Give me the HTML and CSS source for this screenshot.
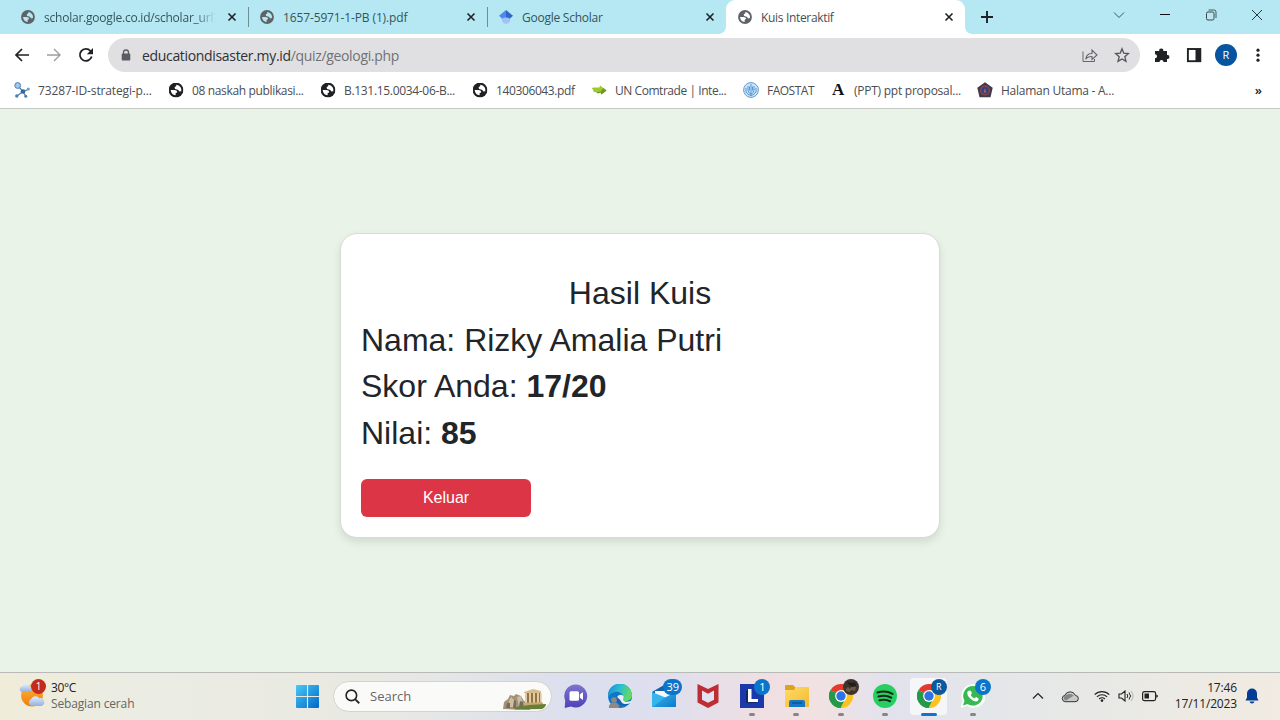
FILE: index.html
```html
<!DOCTYPE html>
<html lang="id">
<head>
<meta charset="utf-8">
<title>Kuis Interaktif</title>
<link rel="stylesheet" href="styles.css">
</head>
<body>
<svg class="defs" aria-hidden="true">
  <defs>
    <symbol id="globe" viewBox="0 0 16 16"><circle cx="8" cy="8" r="7.900" fill="currentColor"/><path d="M8.300 2.300Q11.300 2.500 12.900 5q1.200 2 .7 4.200L11.500 9.600Q10.800 7.600 9 7.500 6.300 7.200 6.500 5.300 6.700 4.300 8.200 4zM2.300 7.900H6.300Q9 8.200 9.300 9.800 9.200 11 7.600 11.200V13.700Q2.800 12.800 2.300 7.900z" fill="var(--land)"/></symbol>
    <symbol id="close" viewBox="0 0 10 10"><path d="M1.500 1.500l7 7M8.500 1.500l-7 7" stroke="#202124" stroke-width="1.600" fill="none"/></symbol>
    <symbol id="chrome" viewBox="0 0 24 24"><path d="M12 12L1.600 6A12 12 0 0 1 22.400 6z" fill="#e33b2e"/><path d="M12 12L22.400 6A12 12 0 0 1 12 24z" fill="#fcc31e"/><path d="M12 12v12A12 12 0 0 1 1.600 6z" fill="#249a48"/><path d="M12 6h10.400l-5.200 9L12 24l5-9z" fill="#fcc31e"/><path d="M1.600 6L7 15l5 3 3-1-3.500 7A12 12 0 0 1 1.600 6z" fill="#249a48"/><circle cx="12" cy="12" r="5.900" fill="#fff"/><circle cx="12" cy="12" r="4.700" fill="#2d73e8"/></symbol>
    <linearGradient id="winG" x2="1" y2="1"><stop stop-color="#48c9f8"/><stop offset="1" stop-color="#0067c8"/></linearGradient>
    <linearGradient id="chatG" x2="0" y2="1"><stop stop-color="#7f72cf"/><stop offset="1" stop-color="#4d43b8"/></linearGradient>
    <linearGradient id="edgeG" x2="1" y2=".3"><stop stop-color="#1689d4"/><stop offset=".5" stop-color="#2abbd5"/><stop offset="1" stop-color="#62da62"/></linearGradient>
    <linearGradient id="mailG" x2="1" y2="1"><stop stop-color="#35b8ef"/><stop offset="1" stop-color="#0e79cc"/></linearGradient>
    <linearGradient id="sunG" x2="0" y2="1"><stop stop-color="#fcb62c"/><stop offset="1" stop-color="#ed7d16"/></linearGradient>
    <linearGradient id="cloudG" x2="0" y2="1"><stop stop-color="#e4eefb"/><stop offset="1" stop-color="#93b1df"/></linearGradient>
    <linearGradient id="folderG" x2="1" y2="1"><stop stop-color="#ffdc68"/><stop offset="1" stop-color="#f5b92e"/></linearGradient>
  </defs>
</svg>

<header class="browser">
  <div class="tabstrip">
    <div class="tab">
      <svg class="favicon grey"><use href="#globe"/></svg><span class="tab-title fade t1">scholar.google.co.id/scholar_url?</span><svg class="tab-close"><use href="#close"/></svg>
    </div>
    <div class="tab divided">
      <svg class="favicon grey"><use href="#globe"/></svg><span class="tab-title t2">1657-5971-1-PB (1).pdf</span><svg class="tab-close"><use href="#close"/></svg>
    </div>
    <div class="tab divided">
      <svg class="favicon" viewBox="0 0 16 16"><circle cx="8" cy="10.800" r="4.900" fill="#a4c1f7"/><path d="M0 6.500L8 0v8.500Q4.800 8.500 3.700 10z" fill="#4c8af0"/><path d="M16 6.500L8 0v8.500q3.200 0 4.300 1.500z" fill="#3266c8"/></svg><span class="tab-title t3">Google Scholar</span><svg class="tab-close"><use href="#close"/></svg>
    </div>
    <div class="tab active">
      <svg class="favicon grey on-white"><use href="#globe"/></svg><span class="tab-title t4">Kuis Interaktif</span><svg class="tab-close"><use href="#close"/></svg>
    </div>
    <svg class="new-tab" viewBox="0 0 12 12"><path d="M6 0v12M0 6h12" stroke="#202124" stroke-width="1.900"/></svg>
    <div class="window-controls">
      <svg viewBox="0 0 12 12"><path d="M1 3.500l5 5 5-5" fill="none" stroke="#35545c" stroke-width="1"/></svg>
      <svg viewBox="0 0 12 12"><path d="M1 5.500h10" stroke="#111" stroke-width="1"/></svg>
      <svg viewBox="0 0 12 12"><rect x="1.500" y="3" width="7.500" height="8" rx="1.500" fill="none" stroke="#333" stroke-width=".9"/><path d="M3.500 1h5.500q2 0 2 2v6" fill="none" stroke="#333" stroke-width=".8"/></svg>
      <svg viewBox="0 0 12 12"><path d="M1 1l10 10M11 1L1 11" stroke="#26383c" stroke-width="1"/></svg>
    </div>
  </div>

  <div class="toolbar">
    <div class="nav">
      <svg viewBox="0 0 16 16"><path d="M15 8H2M8 2L2 8l6 6" fill="none" stroke="#202124" stroke-width="1.700"/></svg>
      <svg viewBox="0 0 16 16"><path d="M1 8h13M8 2l6 6-6 6" fill="none" stroke="#9c9da0" stroke-width="1.400"/></svg>
      <svg viewBox="0 0 16 16"><path d="M13.700 9.500A6 6 0 1 1 12.500 4L14 6" fill="none" stroke="#202124" stroke-width="1.800"/><path d="M15 1v6.200H8.800z" fill="#202124"/></svg>
    </div>
    <div class="omnibox">
      <svg class="lock" viewBox="0 0 10 12"><path d="M2.500 5V3.500a2.500 2.500 0 0 1 5 0V5" fill="none" stroke="#5b5c61" stroke-width="1.300"/><rect x=".7" y="4.500" width="8.600" height="7" rx="1" fill="#5b5c61"/></svg>
      <span class="url">educationdisaster.my.id<span class="path">/quiz/geologi.php</span></span>
      <svg class="share" viewBox="0 0 16 16"><path d="M1 4.500v10h11.500V12" fill="none" stroke="#65666a"/><path d="M4 11.500c.3-3.500 2.300-5 6-5V3l5 5-5 4.500V9.500c-3 0-4.500.4-6 2z" fill="none" stroke="#65666a" stroke-width="1.100"/></svg>
      <svg class="star" viewBox="0 0 16 16"><path d="M8 1.800l1.700 4.300 4.700.4-3.600 3.200 1.200 4.700L8 11.900l-4 2.500 1.200-4.700L1.600 6.500l4.700-.4z" fill="none" stroke="#55565a" stroke-width="1.300"/></svg>
    </div>
    <div class="actions">
      <svg viewBox="0 0 16 16"><path d="M1 4h4.300a2 2 0 1 1 3.900 0H13v4a2 2 0 1 1 0 3.900V15H9.500a2 2 0 0 0-4 0H1v-3.700a2 2 0 0 0 0-4z" fill="#202124"/></svg>
      <svg viewBox="0 0 16 16"><rect x="1.900" y="2" width="12.400" height="12.200" fill="#fff" stroke="#202124" stroke-width="1.900"/><path d="M9.500 2H14v12H9.500z" fill="#202124"/></svg>
      <span class="avatar">R</span>
      <svg viewBox="0 0 16 16"><g fill="#202124"><circle cx="8" cy="3.200" r="1.600"/><circle cx="8" cy="8.200" r="1.600"/><circle cx="8" cy="13.200" r="1.600"/></g></svg>
    </div>
  </div>

  <nav class="bookmarks">
    <a class="bm w154"><svg viewBox="0 0 16 16"><path d="M3.500 3.500L9 9.500l5-2M9 9.500l2.500 4.500M9 9.500L3 14" stroke="#4b7fb5" stroke-width="1.200" fill="none"/><circle cx="3.700" cy="3.500" r="2.900" fill="#9fc9ea" stroke="#4b7fb5"/><circle cx="9" cy="9.500" r="2.300" fill="#35659a"/><circle cx="14.300" cy="7" r="1.500" fill="#6d9dca"/><circle cx="2.800" cy="14" r="1.700" fill="#4b7fb5"/><circle cx="11.800" cy="14.300" r="1.500" fill="#4b7fb5"/></svg><span class="b1">73287-ID-strategi-p...</span></a>
    <a class="bm w152"><svg class="dark"><use href="#globe"/></svg><span class="b2">08 naskah publikasi...</span></a>
    <a class="bm w152"><svg class="dark"><use href="#globe"/></svg><span class="b3">B.131.15.0034-06-B...</span></a>
    <a class="bm w119"><svg class="dark"><use href="#globe"/></svg><span class="b4">140306043.pdf</span></a>
    <a class="bm w152"><svg viewBox="0 0 16 16"><path d="M.8 6.300c2.500-1.300 4.500-.3 8-1V3.200l6.700 5.300-5 4-1-2c-2 1.300-3.500 1-4-.5C3.500 10.800 2 10 2.300 8.300z" fill="#9dca30"/><path d="M9.500 9.800L12.500 6l3 2.500-5 4-1-2c-2 1.300-3.500 1-4-.5z" fill="#6a9c1d"/></svg><span class="b5">UN Comtrade | Inte...</span></a>
    <a class="bm w87"><svg viewBox="0 0 16 16"><circle cx="8" cy="8" r="7.400" fill="#cfe3f7" stroke="#5d9ddb"/><path d="M8 2v12M5 4v4q0 3 3 4 3-1 3-4V4M3 6v4q2 3 5 3.500Q11 13 13 10V6M6.500 4.500v4M9.500 4.500v4" fill="none" stroke="#4a90d6" stroke-width=".9"/></svg><span class="b6">FAOSTAT</span></a>
    <a class="bm w147"><i class="letter">A</i><span class="b7">(PPT) ppt proposal...</span></a>
    <a class="bm"><svg viewBox="0 0 16 16"><path d="M8 .3l7.700 5.400-2.200 9.600h-11L.3 5.700z" fill="#43394c"/><circle cx="8" cy="8.500" r="5" fill="#8d4a46"/><circle cx="8" cy="8.500" r="3.700" fill="#3a3f80"/><path d="M8 6l1.300 4.500H6.700z" fill="#a5657a"/></svg><span class="b8">Halaman Utama - A...</span></a>
    <span class="more">»</span>
  </nav>
</header>

<main class="page">
  <section class="card">
    <h1 class="heading">Hasil Kuis</h1>
    <p class="line name">Nama: Rizky Amalia Putri</p>
    <p class="line">Skor Anda: <b>17/20</b></p>
    <p class="line">Nilai: <b>85</b></p>
    <button class="exit">Keluar</button>
  </section>
</main>

<footer class="taskbar">
  <div class="weather">
    <span class="weather-icon">
      <svg viewBox="0 0 26 26"><circle cx="13.500" cy="13" r="10.500" fill="url(#sunG)"/><path d="M3 9.500a3 3 0 0 1 1-5.500 4.500 4.500 0 0 1 8 .5 2.800 2.800 0 0 1 0 5z" fill="url(#cloudG)"/><path d="M13 23a3.500 3.500 0 0 1-.5-6.500 4.500 4.500 0 0 1 8-.8A3.700 3.700 0 0 1 22.500 23z" fill="url(#cloudG)"/></svg>
      <b class="alert">1</b>
    </span>
    <div class="weather-text"><span class="temp">30°C</span><span class="sky">Sebagian cerah</span></div>
  </div>
  <svg class="start" viewBox="0 0 24 24"><path d="M0 1q0-1 1-1h10.400v11.400H0zM12.600 0H23q1 0 1 1v10.400H12.600zM0 12.600h11.400V24H1q-1 0-1-1zM12.600 12.600H24V23q0 1-1 1H12.600z" fill="url(#winG)"/></svg>
  <div class="search">
    <svg class="lens" viewBox="0 0 16 16"><circle cx="6.800" cy="6.800" r="5.600" fill="none" stroke="#222" stroke-width="1.700"/><path d="M11 11l4.200 4.200" stroke="#222" stroke-width="1.900"/></svg>
    <span class="search-label">Search</span>
    <svg class="ruins" viewBox="0 0 44 22"><path d="M0 21l1-7 4-3 2-4 4 1 2-2 5 2 3 5 6 2v7z" fill="#a39178"/><path d="M6 13l2-4 3 3v7H6zM14 9l4-1 2 8-4 3z" fill="#cfbfa0"/><path d="M4 15h3v5H3zM11 12l2 1v7h-3zM17 13l3 1v5h-4z" fill="#756b60"/><path d="M21 4l9-3 8 2v2H21z" fill="#d8bd8c"/><path d="M22 5h16v9l-3 2H22z" fill="#927345"/><path d="M23 5v10M27 5v10M31 5v10M35 5v10M38 5v9" stroke="#ead5aa" stroke-width="1.800"/><path d="M20 15l19-1 2 3-18 2z" fill="#c9aa71"/><path d="M14 19l12-2 17-1q0 3-4 5l-28 .5z" fill="#648038"/></svg>
  </div>

  <div class="apps">
    <span class="app"><svg viewBox="0 0 24 24"><path d="M12 .5A11.500 11.500 0 1 1 7 22.500L.7 24l.5-7.500A11.500 11.500 0 0 1 12 .5z" fill="url(#chatG)"/><rect x="5.500" y="7.300" width="9.500" height="9.500" rx="1.500" fill="#fff"/><path d="M16.300 10.500l2.200-1.700v6.500l-2.200-1.700z" fill="#fff" stroke="#fff"/></svg></span>
    <span class="app"><svg viewBox="0 0 24 24"><circle cx="12" cy="12" r="12" fill="#1474c8"/><path d="M0 12A12 12 0 0 1 24 11c0 4.500-3.500 6-6.500 6-3 0-3.800-1-2.600-2.500C16.500 11 12 7 7 8c-4 .8-6 3-7 6z" fill="url(#edgeG)"/><path d="M9 12c-2 5 2 9.500 7 9.500 3 0 5-1 6.700-3-4 2-9 1-9-3z" fill="#1760ae"/><path d="M9 13q2-3 5-2c2 .7 2.300 2.500 1 4 0 3 4 3.500 9 1.500l-1.300 2.500c-4 2-9 1.500-10.500-3z" fill="#e7ecf5"/><circle cx="6" cy="16" r="2.800" fill="#8e8985"/><path d="M.8 24q0-5.500 5.200-5.500t5.200 5.500z" fill="#8e8985"/></svg></span>
    <span class="app"><svg viewBox="0 0 24 24"><path d="M0 8L12 1l12 7v15H0z" fill="#1763a5"/><path d="M3 7h18v10H3z" fill="#f3f8fb"/><path d="M0 8l24 10v4q0 1-1 1H1q-1 0-1-1z" fill="#35b5ec"/><path d="M24 8v14q0 1-1 1H1L12 14z" fill="url(#mailG)"/></svg><b class="badge wide">39</b></span>
    <span class="app"><svg viewBox="0 0 24 24"><path d="M1.500 0L12 5 22.500 0v18.500L12 24 1.500 18.500z" fill="#bd2d33"/><path d="M6 6.500l6 3.200 6-3.200v9.300l-6 3-6-3z" fill="#e2e2f0"/></svg></span>
    <span class="app"><svg viewBox="0 0 24 24"><path d="M0 0h24v24H0z" fill="#1b39ab"/><path d="M8 5L6 7v12h10l2-2V15h-7V5z" fill="#132866"/><path d="M8 5h3.500v10H18v3H8z" fill="#fff"/></svg><b class="badge">1</b><i class="dot"></i></span>
    <span class="app"><svg viewBox="0 0 24 24"><path d="M0 2q0-1 1-1h7l3 3v6H0z" fill="#dda220"/><path d="M0 6h9l2-3h12q1 0 1 1v18q0 1-1 1H1q-1 0-1-1z" fill="url(#folderG)"/><path d="M4 23v-5q0-2 2-2h12q2 0 2 2v5z" fill="#1777c4"/><path d="M7 19h10" stroke="#0c5598" stroke-width="1.500"/></svg><i class="dot"></i></span>
    <span class="app"><svg><use href="#chrome"/></svg><svg class="photo" viewBox="0 0 16 16"><circle cx="8" cy="8" r="8" fill="#3e342e"/><path d="M3 10l2-2 2 2 2-3 4 1-1 4-3-1-3 2-3-1z" fill="#6b5b4b"/><path d="M4 3l5 1 3-1 1 4-4 1-3-2z" fill="#211f1c"/></svg><i class="dot"></i></span>
    <span class="app"><svg viewBox="0 0 24 24"><circle cx="12" cy="12" r="12" fill="#27cf60"/><path d="M4.500 8.500q8-2.500 15 1.300M5.500 12.500q7-2 12.800 1.100M6.500 16.200q6-1.400 10.500 1" fill="none" stroke="#17261d" stroke-width="2.100" stroke-linecap="round"/></svg><i class="dot"></i></span>
    <span class="app current"><svg><use href="#chrome"/></svg><b class="badge profile">R</b><i class="dot long"></i></span>
    <span class="app"><svg viewBox="0 0 24 24"><path d="M12 0A12 12 0 1 1 6 22L-.5 24l2-7A12 12 0 0 1 12 0z" fill="#f7fff8"/><path d="M12 2A9.800 9.800 0 1 1 6.500 20L2 21.500l1.500-4.800A9.800 9.800 0 0 1 12 2z" fill="#38b850"/><path d="M8 6.500l2 .5.900 2.500-1.200 1.500q1.300 2.500 3.800 3.600l1.500-1.500 2.500 1.300q.5 2.600-2.600 3-2.800 0-5.700-2.800-3-3-3-5.400 0-2 1.800-2.700z" fill="#fff"/></svg><b class="badge">6</b><i class="dot"></i></span>
  </div>

  <div class="tray">
    <svg class="up" viewBox="0 0 12 12"><path d="M1 8.500l5-5 5 5" fill="none" stroke="#222" stroke-width="1.200"/></svg>
    <svg class="cloud" viewBox="0 0 16 12"><path d="M3.500 10.800a3 3 0 0 1-.3-5.900A5.300 5.300 0 0 1 13 5a2.900 2.900 0 0 1-.4 5.800z" fill="#c9c9c9" stroke="#303030" stroke-width=".9"/><path d="M2.500 6q4-4 9-1L4.500 9.800Q1.500 9 2.500 6z" fill="#858585"/></svg>
    <svg class="wifi" viewBox="0 0 16 12"><path d="M.7 4.700a10.300 10.300 0 0 1 14.600 0M2.900 6.900a7.200 7.200 0 0 1 10.200 0M5.100 9a4.200 4.200 0 0 1 5.800 0" fill="none" stroke="#222" stroke-width="1.100"/><circle cx="8" cy="10.600" r="1.300" fill="#222"/></svg>
    <svg class="sound" viewBox="0 0 16 12"><path d="M1 4h2.500L7 1v10L3.500 8H1z" fill="none" stroke="#222" stroke-width="1.100"/><path d="M9 4q1.500 2 0 4M11 2.500q3 3.500 0 7" fill="none" stroke="#222"/><path d="M13 1q4 5 0 10" fill="none" stroke="#aaa" stroke-width=".9"/></svg>
    <svg class="battery" viewBox="0 0 16 12"><rect x=".6" y="1.600" width="13" height="9" rx="1.800" fill="none" stroke="#222" stroke-width="1.200"/><path d="M2.500 3.500H7v5H2.500zM14.300 4.500l1.500.7v1.800l-1.500.7z" fill="#222"/></svg>
    <div class="clock"><span class="time">17:46</span><span class="date">17/11/2023</span></div>
    <svg class="bell" viewBox="0 0 14 16"><path d="M7 .5a5 5 0 0 1 5 5v4l1.500 3H.5L2 9.500v-4a5 5 0 0 1 5-5z" fill="#063d94"/><path d="M4.500 13.500h5q-.5 2-2.500 2t-2.500-2z" fill="#063d94"/></svg>
  </div>
</footer>
</body>
</html>
```
FILE: styles.css
```css
* { box-sizing: border-box; }
body {
  margin: 0;
  width: 1280px;
  height: 720px;
  overflow: hidden;
  display: flex;
  flex-direction: column;
  font-family: "Open Sans", "Noto Sans", sans-serif;
  font-size: 12px;
  color: #202124;
}
svg { display: block; flex: none; }
.defs { position: absolute; width: 0; height: 0; }
span { white-space: nowrap; }

/* Browser chrome */
.browser { height: 109px; flex: none; background: #fff; border-bottom: 1px solid #c6c9c6; }
.tabstrip { height: 34px; display: flex; align-items: center; background: #b5e8f2; padding-left: 9px; }
.tab { width: 239px; height: 34px; display: flex; align-items: center; padding: 0 11px 0 12px; flex: none; }
.tab.divided { background: linear-gradient(#6c8f96, #6c8f96) 0 50% / 1px 20px no-repeat; }
.tab.active { background: #fff; border-radius: 9px 9px 0 0; position: relative; }
.tab.active::before, .tab.active::after { content: ""; position: absolute; bottom: 0; width: 7px; height: 7px; }
.tab.active::before { left: -7px; background: radial-gradient(circle at 0 0, #b5e8f2 6.5px, #fff 7px); }
.tab.active::after { right: -7px; background: radial-gradient(circle at 100% 0, #b5e8f2 6.5px, #fff 7px); }
.favicon { width: 14px; height: 14px; margin-right: 9px; }
.grey { color: #5f6368; --land: #b5e8f2; }
.grey.on-white { --land: #fff; }
.dark { color: #202124; --land: #fff; }
.tab-title { width: 172px; overflow: hidden; color: #36545b; letter-spacing: -.25px; }
.tab-title.t1 { letter-spacing: -.22px; }
.tab-title.t2 { letter-spacing: -.13px; }
.tab-title.t4 { letter-spacing: -.33px; }
.active .tab-title { color: #4a4d51; }
.fade { -webkit-mask-image: linear-gradient(90deg, #000 88%, transparent); mask-image: linear-gradient(90deg, #000 88%, transparent); }
.tab-close { width: 10px; height: 10px; margin-left: auto; }
.new-tab { width: 12px; height: 12px; margin-left: 16px; }
.window-controls { margin-left: auto; display: flex; gap: 34px; padding: 0 17px 4px 0; }
.window-controls svg { width: 12px; height: 12px; }

.toolbar { height: 42px; display: flex; align-items: center; padding: 0 14px; }
.nav { display: flex; gap: 16px; width: 94px; }
.nav svg { width: 16px; height: 16px; }
.omnibox { width: 1032px; height: 34px; border-radius: 17px; background: #e0e0e2; display: flex; align-items: center; padding: 0 10px 0 13px; }
.lock { width: 10px; height: 12px; }
.url { margin-left: 11px; font-size: 14px; letter-spacing: -.33px; color: #303134; }
.path { color: #707175; }
.share { width: 16px; height: 16px; margin-left: auto; margin-right: 16px; }
.star { width: 16px; height: 16px; }
.actions { display: flex; align-items: center; gap: 16px; margin-left: 14px; }
.actions svg { width: 16px; height: 16px; }
.avatar { width: 22px; height: 22px; margin: 0 -3px 0 -3px; border-radius: 50%; background: #0755a0; color: #fff; text-align: center; line-height: 22px; font-size: 11px; }

.bookmarks { height: 28px; display: flex; align-items: center; padding: 0 18px 0 14px; }
.bm { display: flex; align-items: center; gap: 8px; flex: none; color: #4a4d51; letter-spacing: -.25px; }
.bm svg { width: 16px; height: 16px; }
.bm .dark { padding: .5px; }
.b1 { letter-spacing: -.14px; }
.b2 { letter-spacing: -.35px; }
.b3 { letter-spacing: -.32px; }
.b4 { letter-spacing: -.38px; }
.b5 { letter-spacing: -.45px; }
.b6 { letter-spacing: -.5px; }
.w154 { width: 154px; }
.w152 { width: 152px; }
.w119 { width: 119px; }
.w87 { width: 87px; }
.w147 { width: 147px; }
.letter { width: 16px; text-align: center; font: bold 17px/16px "Liberation Serif", serif; color: #111; }
.more { margin-left: auto; font-size: 13px; font-weight: 600; }

/* Quiz result */
.page { flex: 1; background: #eaf3e7; padding-top: 124px; }
.card { width: 600px; height: 305px; margin: 0 auto; padding: 36px 20px 20px; background: #fff; border: 1px solid #d6dbd6; border-radius: 17px; box-shadow: 0 4px 8px rgba(0, 0, 0, .1); font-family: "Liberation Sans", Arial, sans-serif; color: #212529; }
.heading, .line { margin: 0; font-size: 32px; line-height: 46.600px; font-weight: 400; }
.heading { text-align: center; }
.exit { display: block; width: 170px; height: 38px; margin-top: 22.600px; padding: 0; border: 0; border-radius: 6px; background: #dc3545; color: #fff; font: 16px "Liberation Sans", Arial, sans-serif; }

/* Taskbar */
.taskbar { height: 48px; flex: none; display: flex; align-items: center; border-top: 1px solid #b9bab7; background: linear-gradient(90deg, #f1ecda 0, #ebece2 110px, #e9e9e3 380px, #dcdfee 570px, #dfdfee 670px, #f0dfe2 770px, #f1e2e2 820px, #e2e2ee 890px, #e4e7e9 1000px, #e9e9e5 1120px, #f1ebe2 1280px); }
.weather { width: 296px; display: flex; align-items: center; padding-left: 18px; }
.weather-icon { position: relative; width: 33px; }
.weather-icon svg { width: 27px; height: 27px; margin-top: -3px; }
.alert { position: absolute; left: 13px; top: -6px; width: 15px; height: 15px; border-radius: 50%; background: #c42b1c; color: #fff; font-size: 10px; line-height: 15px; font-weight: 400; text-align: center; }
.weather-text { display: flex; flex-direction: column; line-height: 16px; margin-top: -1px; }
.temp { color: #222; letter-spacing: -.4px; }
.sky { color: #666662; letter-spacing: -.15px; }
.start { width: 23px; height: 23px; }
.search { width: 219px; height: 31px; margin-left: 14px; padding: 0 4px 0 11px; border: 1px solid #d2d2d0; border-radius: 16px; background: #fafaf9; display: flex; align-items: center; }
.lens { width: 15px; height: 15px; margin-top: -1px; }
.search-label { margin: -1px 0 0 10px; font-size: 13px; color: #666; }
.ruins { width: 44px; height: 22px; margin-left: auto; margin-top: 4px; }
.apps { display: flex; margin-left: 2px; }
.app { position: relative; width: 44.100px; height: 38px; display: flex; justify-content: center; align-items: center; }
.app > svg { width: 24px; height: 24px; margin-top: -1px; }
.current::before { content: ""; position: absolute; left: 3.500px; top: 0; width: 37px; height: 37px; border-radius: 4px; background: #f5f6f8; }
.current > svg { position: relative; }
.badge { position: absolute; left: 24px; top: 1px; width: 16px; height: 16px; border-radius: 8px; background: #0b75cc; color: #fff; font-size: 11px; line-height: 16px; font-weight: 400; text-align: center; }
.wide { left: 21px; width: 19px; }
.profile { background: #0d579c; font-size: 9px; }
.app .photo { position: absolute; left: 24px; top: 2px; width: 16px; height: 16px; }
.dot { position: absolute; left: 19px; bottom: 0; width: 6px; height: 3px; border-radius: 2px; background: #858585; }
.long { left: 14px; width: 16px; background: #0f75c8; }
.tray { display: flex; align-items: center; flex: 1; padding-left: 37px; padding-right: 21px; }
.tray > svg { margin-top: -1px; }
.up { width: 12px; height: 12px; margin-right: 17px; }
.cloud { width: 18px; height: 13px; margin-right: 15px; }
.wifi { width: 16px; height: 12px; margin-right: 8px; }
.sound { width: 16px; height: 12px; margin-right: 8px; }
.battery { width: 16px; height: 12px; }
.clock { margin-left: auto; margin-top: -1px; display: flex; flex-direction: column; text-align: right; line-height: 16px; letter-spacing: -.15px; }
.bell { width: 14px; height: 16px; margin-left: 8px; }
```
